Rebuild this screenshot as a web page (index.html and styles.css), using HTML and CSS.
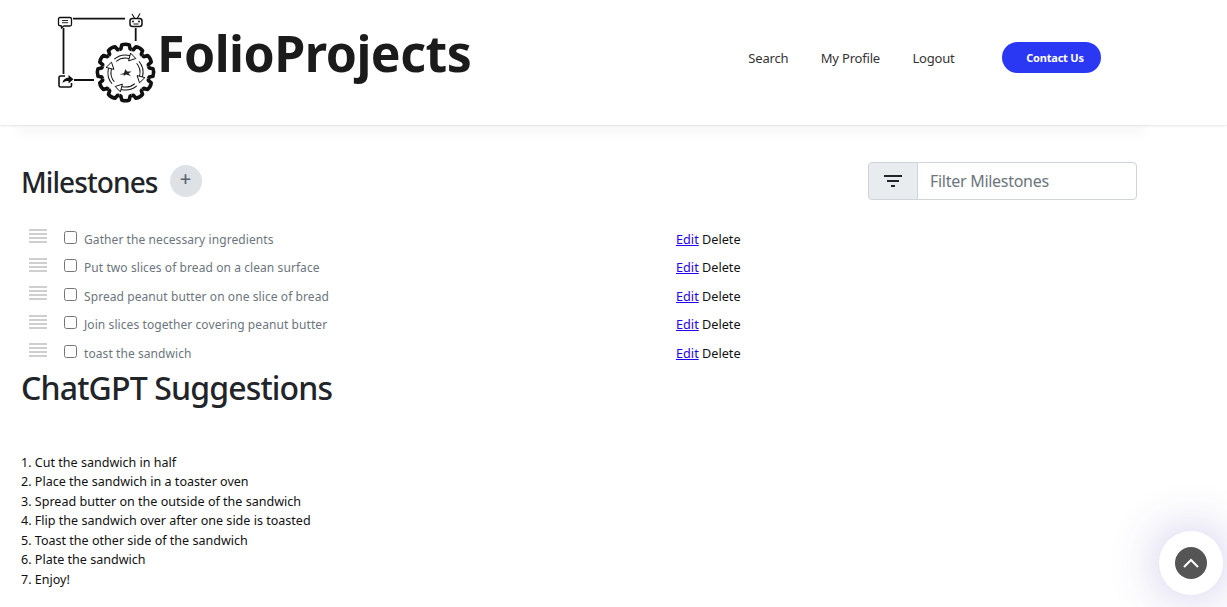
FILE: index.html
```html
<!DOCTYPE html>
<html lang="en">
<head>
<meta charset="utf-8">
<title>FolioProjects</title>
<link rel="stylesheet" href="styles.css">
</head>
<body>
<header class="site-header">
  <a class="brand" href="#">
    <svg class="brand-mark" width="104" height="106" viewBox="0 0 104 106" fill="none" stroke="#111">
      <defs>
        <path id="tooth" d="M-6.200-23L-4.600-23.700L-3.800-27.500Q0-29 3.800-27.500L4.600-23.700L6.200-23" stroke-width="3.600" stroke-linejoin="round"/>
        <g id="arrow">
          <path d="M-10.300-12.300A16 16 0 0 1 4.100-15.500" stroke-width="4"/>
          <path d="M-11-11.600A16 16 0 0 1 4.100-15.500" stroke="#fff" stroke-width="2"/>
          <path d="M5.100-19.400L10.300-14L3.100-11.600Z" fill="#fff" stroke-width="1" stroke-linejoin="round"/>
        </g>
      </defs>
      <path d="M6.500 15V61M16 5.700H68M78.700 15V28M17 67H37" stroke-width="1.800"/>
      <path d="M3 4.500h10q1.500 0 1.500 1.500v5.500q0 1.500-1.500 1.500H7l-2.500 2v-2q-3-.1-3-1.500V6q0-1.500 1.500-1.500z" stroke-width="1.300"/>
      <path d="M5 7.500h6M5 9.700h6" stroke-width=".9"/>
      <rect x="73" y="5.500" width="12" height="8" rx="2.500" stroke-width="1.500"/>
      <path d="M75 1l2.500 4M83 .5L80.500 5M76.500 11h5" stroke-width="1.100"/>
      <circle cx="76" cy="8.500" r="1" fill="#111" stroke="none"/>
      <circle cx="82" cy="8.500" r="1" fill="#111" stroke="none"/>
      <path d="M8 63H3.500Q2 63 2 64.500V72.500Q2 74 3.500 74H13Q14.500 74 14.500 72.500V70" stroke-width="1.600"/>
      <path d="M5.500 70c.6-3.800 3.200-5.300 6-5.300V62l5 4.200-5 4.200v-2.500c-2.500 0-4.500.4-6 2z" fill="#111" stroke="none"/>
      <g transform="translate(68.500 59.500)">
        <use href="#tooth"/>
        <use href="#tooth" transform="rotate(30)"/>
        <use href="#tooth" transform="rotate(60)"/>
        <use href="#tooth" transform="rotate(90)"/>
        <use href="#tooth" transform="rotate(120)"/>
        <use href="#tooth" transform="rotate(150)"/>
        <use href="#tooth" transform="rotate(180)"/>
        <use href="#tooth" transform="rotate(210)"/>
        <use href="#tooth" transform="rotate(240)"/>
        <use href="#tooth" transform="rotate(270)"/>
        <use href="#tooth" transform="rotate(300)"/>
        <use href="#tooth" transform="rotate(330)"/>
        <use href="#arrow"/>
        <use href="#arrow" transform="rotate(90)"/>
        <use href="#arrow" transform="rotate(180)"/>
        <use href="#arrow" transform="rotate(270)"/>
        <path d="M-6 2L-1.500 .5L0-3.500L1.500-1H6L3 1L5.500 3.500L.5 2L-2 3.500L-1.500 2Z" fill="#222" stroke="none"/>
      </g>
    </svg>
    <span class="brand-name">FolioProjects</span>
  </a>
  <nav class="site-nav">
    <a href="#">Search</a>
    <a href="#">My Profile</a>
    <a href="#">Logout</a>
    <a class="contact" href="#">Contact Us</a>
  </nav>
</header>

<main class="content">
  <section class="toolbar">
    <div class="title-group">
      <h2>Milestones</h2>
      <button class="add-btn" type="button">+</button>
    </div>
    <div class="filter">
      <span class="filter-icon">
        <svg width="18" height="12" viewBox="0 0 18 12" stroke="#212529" stroke-width="2"><path d="M0 1h18M3 6h12M7 11h4"/></svg>
      </span>
      <input class="filter-input" type="text" placeholder="Filter Milestones">
    </div>
  </section>

  <ul class="milestones">
    <li><span class="grip"></span><input type="checkbox"><span class="label">Gather the necessary ingredients</span><span class="actions"><a href="#">Edit</a> Delete</span></li>
    <li><span class="grip"></span><input type="checkbox"><span class="label">Put two slices of bread on a clean surface</span><span class="actions"><a href="#">Edit</a> Delete</span></li>
    <li><span class="grip"></span><input type="checkbox"><span class="label">Spread peanut butter on one slice of bread</span><span class="actions"><a href="#">Edit</a> Delete</span></li>
    <li><span class="grip"></span><input type="checkbox"><span class="label">Join slices together covering peanut butter</span><span class="actions"><a href="#">Edit</a> Delete</span></li>
    <li><span class="grip"></span><input type="checkbox"><span class="label">toast the sandwich</span><span class="actions"><a href="#">Edit</a> Delete</span></li>
  </ul>

  <h1>ChatGPT Suggestions</h1>
  <ol class="suggestions">
    <li>1. Cut the sandwich in half</li>
    <li>2. Place the sandwich in a toaster oven</li>
    <li>3. Spread butter on the outside of the sandwich</li>
    <li>4. Flip the sandwich over after one side is toasted</li>
    <li>5. Toast the other side of the sandwich</li>
    <li>6. Plate the sandwich</li>
    <li>7. Enjoy!</li>
  </ol>
</main>

<a class="to-top" href="#" aria-label="Back to top">
  <span class="to-top-inner">
    <svg width="16" height="10" viewBox="0 0 16 10" fill="none" stroke="#fff" stroke-width="2"><path d="M1 9l7-7 7 7"/></svg>
  </span>
</a>
</body>
</html>
```
FILE: styles.css
```css
* { box-sizing: border-box; }
html, body { height: 100%; }
body {
  margin: 0;
  overflow: hidden;
  background: #fff;
  color: #212529;
  font-family: "Noto Sans", "Open Sans", sans-serif;
  font-size: 12px;
}
a { text-decoration: none; color: inherit; }

.site-header {
  position: relative;
  height: 125px;
  padding: 0 126px 0 57px;
  display: flex;
  align-items: flex-start;
  justify-content: space-between;
  box-shadow: 0 0 3px rgba(0,0,0,.2);
}
.site-header::after {
  content: "";
  position: absolute;
  top: 100%;
  left: 18px;
  right: 82px;
  height: 14px;
  background: linear-gradient(rgba(0,0,0,.04), transparent);
  filter: blur(5px);
  clip-path: inset(0 -12px -12px -12px);
}
.brand { display: flex; align-items: flex-start; padding-top: 13px; }
.brand-mark { display: block; flex: none; }
.brand-name {
  margin: 10px 0 0 -4px;
  font-size: 50px;
  line-height: 60px;
  font-weight: 700;
  color: #1b1b1b;
  letter-spacing: -.5px;
}
.site-nav {
  display: flex;
  align-items: center;
  gap: 32.500px;
  height: 31px;
  margin-top: 42px;
  font-size: 13px;
  letter-spacing: -.2px;
  color: #333;
}
.contact {
  width: 99px;
  height: 31px;
  margin-left: 15px;
  padding-left: 7px;
  border-radius: 16px;
  background: #2b38f3;
  color: #fff;
  font-size: 11px;
  font-weight: 700;
  letter-spacing: -.2px;
  display: flex;
  align-items: center;
  justify-content: center;
}

.content { padding: 37px 0 0 21px; }
.toolbar {
  width: 1116px;
  height: 38px;
  display: flex;
  align-items: center;
  justify-content: space-between;
}
.title-group { display: flex; align-items: center; gap: 12px; }
h2 { margin: 2px 0 0; font-size: 28px; line-height: 38px; font-weight: 500; letter-spacing: -.9px; color: #212529; }
.add-btn {
  width: 32px;
  height: 32px;
  padding: 0 0 5px;
  border: 0;
  border-radius: 50%;
  background: #dee2e6;
  color: #5c6670;
  font: 500 20px "Noto Sans", sans-serif;
}
.filter { display: flex; height: 38px; width: 269px; }
.filter-icon {
  width: 50px;
  display: flex;
  align-items: center;
  justify-content: center;
  background: #e9ecef;
  border: 1px solid #ced4da;
  border-radius: 4px 0 0 4px;
}
.filter-input {
  flex: 1;
  min-width: 0;
  margin-left: -1px;
  padding: 0 12px;
  border: 1px solid #ced4da;
  border-radius: 0 4px 4px 0;
  font: 400 16px "Noto Sans", sans-serif;
  letter-spacing: -.28px;
  outline: 0;
}
.filter-input::placeholder { color: #6c757d; opacity: 1; }

.milestones { list-style: none; margin: 25px 0 0; padding: 0; }
.milestones li {
  height: 28.500px;
  display: flex;
  align-items: center;
  padding-left: 8px;
}
.grip {
  width: 18px;
  height: 14px;
  margin-top: -6px;
  flex: none;
  background: repeating-linear-gradient(#cfcfcf 0 2px, transparent 2px 4px);
}
.milestones input {
  width: 13px;
  height: 13px;
  margin: -4px 7px 0 17px;
  flex: none;
  appearance: none;
  background: #fff;
  border: 1px solid #767676;
  border-radius: 2.500px;
}
.label { width: 592px; flex: none; color: #6c757d; font-size: 12px; letter-spacing: .08px; }
.actions { color: #111; font-size: 12.700px; line-height: 17px; }
.actions a { color: #2200ee; text-decoration: underline; }

h1 { margin: -1px 0 0; font-size: 32px; line-height: 42px; font-weight: 500; letter-spacing: -.85px; color: #212529; }
.suggestions {
  list-style: none;
  margin: 44px 0 0;
  padding: 0;
  color: #111;
  font-size: 12.550px;
  line-height: 19.600px;
}

.to-top {
  position: fixed;
  left: 1159px;
  top: 531px;
  width: 64px;
  height: 64px;
  border-radius: 50%;
  background: #fff;
  box-shadow: 0 0 50px rgba(70,50,170,.3);
  display: flex;
  align-items: center;
  justify-content: center;
}
.to-top-inner {
  width: 32px;
  height: 32px;
  border-radius: 50%;
  background: #555;
  display: flex;
  align-items: center;
  justify-content: center;
}
```
